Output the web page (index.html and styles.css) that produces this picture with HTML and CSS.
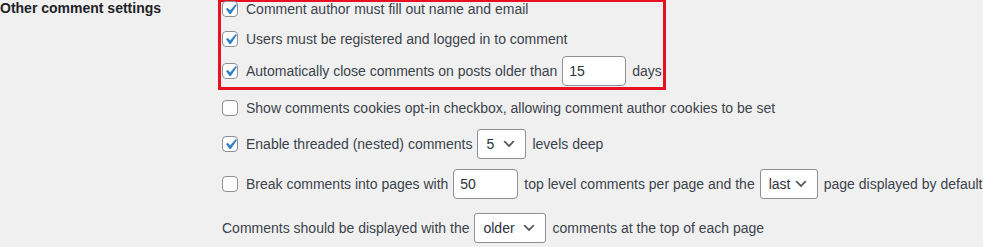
FILE: index.html
```html
<!DOCTYPE html>
<html lang="en">
<head>
  <meta charset="UTF-8" />
  <title>Discussion Settings</title>
  <link rel="stylesheet" href="styles.css">
</head>
<body>
  <div class="form-row">
    <div class="row-label">Other comment settings</div>
    <div class="row-fields">

      <div class="highlight">
        <label class="option first">
          <span class="check on"><svg viewBox="0 0 20 20"><path d="M14.83 4.89l1.34.94-5.81 8.38H9.02L5.78 9.67l1.34-1.25 2.57 2.4z"/></svg></span>
          Comment author must fill out name and email
        </label>
        <label class="option second">
          <span class="check on"><svg viewBox="0 0 20 20"><path d="M14.83 4.89l1.34.94-5.81 8.38H9.02L5.78 9.67l1.34-1.25 2.57 2.4z"/></svg></span>
          Users must be registered and logged in to comment
        </label>
        <label class="option third">
          <span class="check on"><svg viewBox="0 0 20 20"><path d="M14.83 4.89l1.34.94-5.81 8.38H9.02L5.78 9.67l1.34-1.25 2.57 2.4z"/></svg></span>
          Automatically close comments on posts older than
          <span class="field small">15</span>
          days
        </label>
      </div>

      <label class="option cookies">
        <span class="check"></span>
        Show comments cookies opt-in checkbox, allowing comment author cookies to be set
      </label>

      <label class="option threaded">
        <span class="check on"><svg viewBox="0 0 20 20"><path d="M14.83 4.89l1.34.94-5.81 8.38H9.02L5.78 9.67l1.34-1.25 2.57 2.4z"/></svg></span>
        Enable threaded (nested) comments
        <span class="dropdown w-5">5 <svg viewBox="0 0 20 20"><path d="M5 6l5 5 5-5 2 1-7 7-7-7 2-1z"/></svg></span>
        levels deep
      </label>

      <label class="option paged">
        <span class="check"></span>
        Break comments into pages with
        <span class="field wide">50</span>
        top level comments per page and the
        <span class="dropdown w-last">last <svg viewBox="0 0 20 20"><path d="M5 6l5 5 5-5 2 1-7 7-7-7 2-1z"/></svg></span>
        page displayed by default
      </label>

      <div class="option order">
        Comments should be displayed with the
        <span class="dropdown w-older">older <svg viewBox="0 0 20 20"><path d="M5 6l5 5 5-5 2 1-7 7-7-7 2-1z"/></svg></span>
        comments at the top of each page
      </div>

    </div>
  </div>
</body>
</html>
```

FILE: styles.css
```css
body {
  margin: 0;
  background: #f0f0f1;
  color: #3c434a;
  font-family: 'Liberation Sans', Arial, sans-serif;
  font-size: 14px;
  line-height: 16px;
}

.form-row {
  display: flex;
}

.row-label {
  width: 218px;
  flex-shrink: 0;
  color: #1d2327;
  font-weight: bold;
}

.row-fields {
  display: flex;
  flex-direction: column;
  align-items: flex-start;
}

.highlight {
  width: 441px;
  margin-top: -1px;
  padding: 0 0 1px 1px;
  border: 3px solid #e81123;
}

.option {
  display: flex;
  align-items: center;
  white-space: nowrap;
}

.first { margin-top: -1px; height: 16px; }
.second { margin-top: 14px; height: 16px; }
.third { margin-top: 9px; height: 30px; }
.cookies { margin-top: 10px; margin-left: 4px; height: 16px; }
.threaded { margin-top: 13px; margin-left: 4px; height: 30px; }
.paged { margin-top: 10px; margin-left: 4px; height: 30px; }
.order { margin-top: 14px; margin-left: 4px; height: 30px; }

.check {
  width: 16px;
  height: 16px;
  box-sizing: border-box;
  margin-right: 8px;
  border: 1px solid #8c8f94;
  border-radius: 4px;
  background: #fff;
  display: flex;
  align-items: center;
  justify-content: center;
}

.check svg {
  width: 21px;
  height: 21px;
  fill: #3582c4;
  flex-shrink: 0;
}

.field,
.dropdown {
  height: 30px;
  box-sizing: border-box;
  border: 1px solid #8c8f94;
  background: #fff;
  color: #2c3338;
  display: flex;
  align-items: center;
  margin: 0 6px 0 5px;
}

.field {
  border-radius: 4px;
  padding: 0 6px;
}

.small { width: 64px; }
.wide { width: 65px; }

.dropdown {
  border-radius: 3px;
  padding: 0 8px 0 8px;
  justify-content: space-between;
}

.dropdown svg {
  width: 16px;
  height: 16px;
  fill: #50575e;
}

.w-5 { width: 49px; }
.w-last { width: 58px; }
.w-older { width: 72px; }
```
